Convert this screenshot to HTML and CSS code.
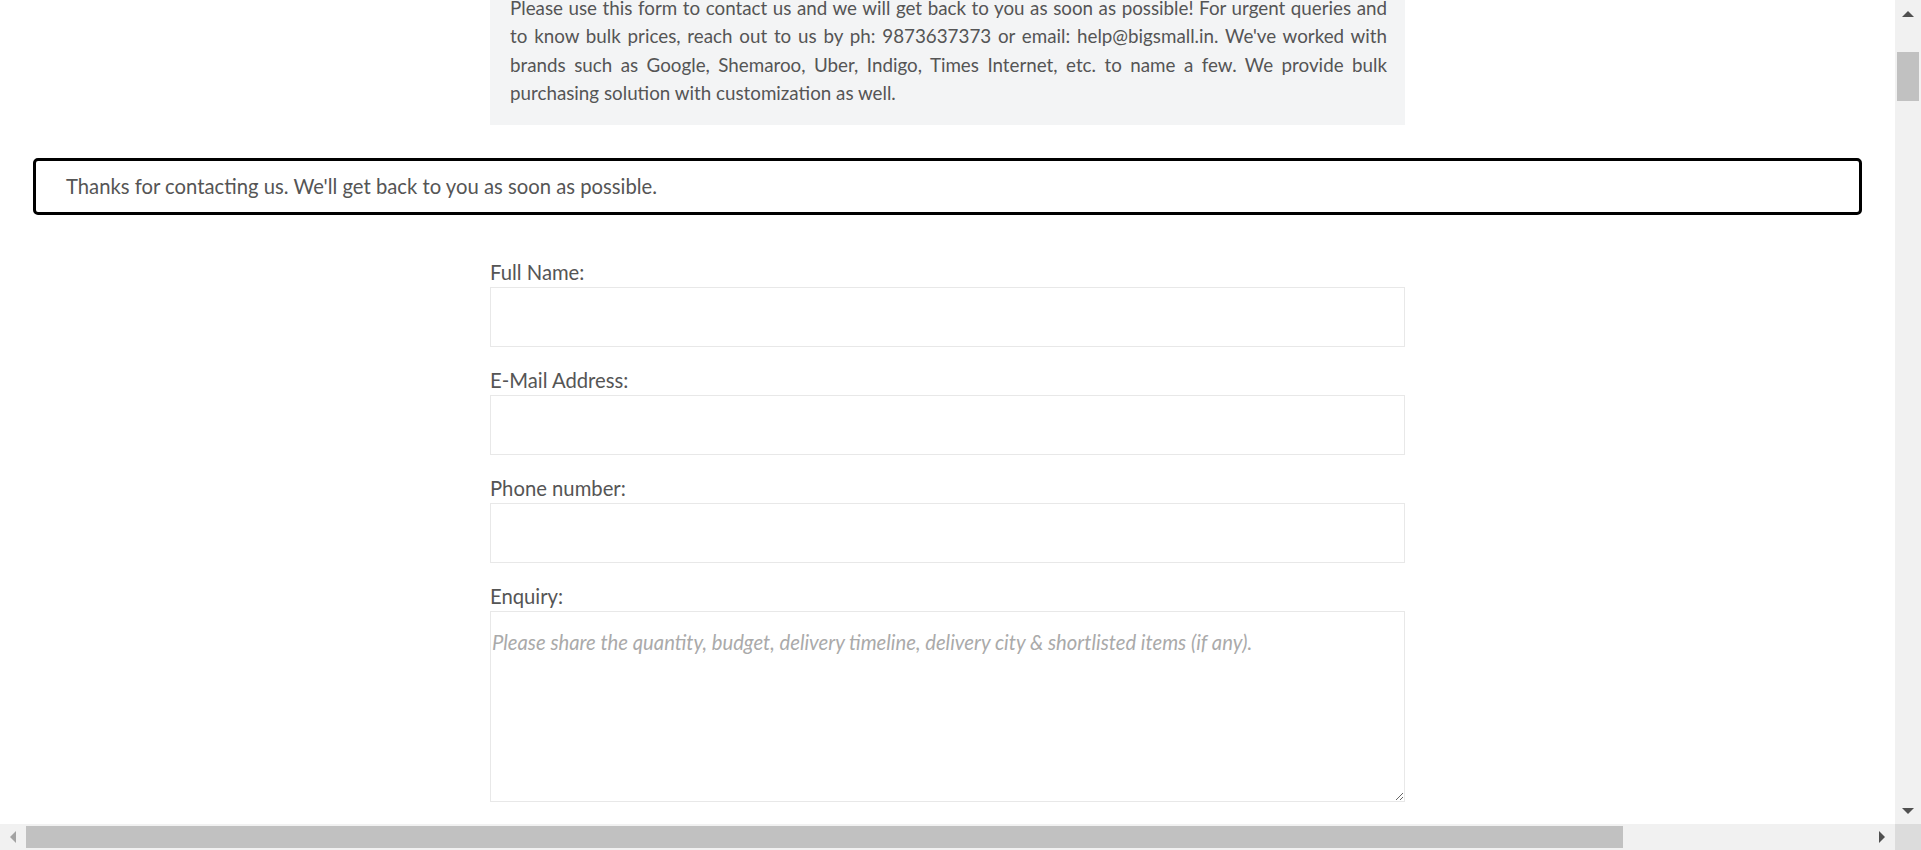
FILE: index.html
```html
<!DOCTYPE html>
<html lang="en">
<head>
<meta charset="utf-8">
<title>Contact us</title>
<link rel="stylesheet" href="styles.css">
</head>
<body>
<div class="frame">
  <main class="viewport">
    <div class="scrolled">
      <section class="intro">
        <p>Please use this form to contact us and we will get back to you as soon as possible! For urgent queries and to know bulk prices, reach out to us by ph: 9873637373 or email: help@bigsmall.in. We've worked with brands such as Google, Shemaroo, Uber, Indigo, Times Internet, etc. to name a few. We provide bulk purchasing solution with customization as well.</p>
      </section>
      <div class="notice">Thanks for contacting us. We'll get back to you as soon as possible.</div>
      <form class="form">
        <label class="label" for="name">Full Name:</label>
        <input class="field" id="name" type="text">
        <label class="label" for="email">E-Mail Address:</label>
        <input class="field" id="email" type="email">
        <label class="label" for="phone">Phone number:</label>
        <input class="field" id="phone" type="tel">
        <label class="label" for="enquiry">Enquiry:</label>
        <textarea class="area" id="enquiry" placeholder="Please share the quantity, budget, delivery timeline, delivery city &amp; shortlisted items (if any)."></textarea>
      </form>
    </div>
  </main>
  <div class="vbar">
    <div class="btn"><span class="tri up"></span></div>
    <div class="vtrack"><div class="vthumb"></div></div>
    <div class="btn"><span class="tri down"></span></div>
  </div>
  <div class="hbar">
    <div class="btn"><span class="tri left"></span></div>
    <div class="htrack"><div class="hthumb"></div></div>
    <div class="btn"><span class="tri right"></span></div>
  </div>
  <div class="corner"></div>
</div>
</body>
</html>
```

FILE: styles.css
```css
html, body {
  margin: 0;
  padding: 0;
  height: 100%;
  overflow: hidden;
  background: #ffffff;
}

body {
  font-family: Lato, "Open Sans", Arial, sans-serif;
  color: #555555;
  font-size: 20.25px;
}

.frame {
  display: grid;
  grid-template-columns: 1fr 26px;
  grid-template-rows: 1fr 26px;
  width: 100vw;
  height: 100vh;
}

.viewport {
  overflow: hidden;
  background: #ffffff;
}

.scrolled {
  margin-top: -26px;
}

.intro {
  width: 915px;
  margin: 0 auto;
  box-sizing: border-box;
  background: #f3f4f5;
  padding: 20px 18px 17px 20px;
}

.intro p {
  margin: 0;
  font-size: 18.8px;
  line-height: 28.4px;
  text-align: justify;
}

.notice {
  margin: 33px 33px 0;
  border: 3px solid #000000;
  border-radius: 5px;
  height: 51px;
  box-sizing: content-box;
  display: flex;
  align-items: center;
  padding: 0 30px;
  line-height: 29px;
}

.form {
  width: 915px;
  margin: 43px auto 0;
  display: flex;
  flex-direction: column;
}

.label {
  display: block;
  line-height: 29px;
}

.field {
  display: block;
  box-sizing: border-box;
  width: 100%;
  height: 60px;
  margin: 0 0 19px;
  border: 1px solid #e8e8e8;
  border-radius: 0;
  padding: 0 2px;
  font-family: inherit;
  font-size: 20.25px;
  color: #555555;
  background: #ffffff;
  outline: none;
}

.area {
  display: block;
  box-sizing: border-box;
  width: 100%;
  height: 191px;
  border: 1px solid #e8e8e8;
  border-radius: 0;
  padding: 16px 1px;
  margin: 0;
  font-family: inherit;
  font-size: 20.25px;
  line-height: 29px;
  color: #555555;
  background: #ffffff;
  outline: none;
  resize: both;
}

.area::placeholder {
  color: #aaaaaa;
  font-style: italic;
}

/* fake scrollbars */
.vbar {
  background: #f1f1f1;
  display: flex;
  flex-direction: column;
}

.hbar {
  background: #f1f1f1;
  display: flex;
}

.corner {
  background: #dcdcdc;
}

.btn {
  flex: 0 0 26px;
  width: 26px;
  height: 26px;
  display: flex;
  align-items: center;
  justify-content: center;
}

.vtrack {
  flex: 1;
  padding: 0 2px;
}

.vthumb {
  margin-top: 26px;
  height: 49px;
  background: #c1c1c1;
}

.htrack {
  flex: 1;
  padding: 2px 0;
  display: flex;
}

.hthumb {
  width: 1597px;
  height: 22px;
  background: #c1c1c1;
}

.tri {
  width: 0;
  height: 0;
  display: block;
}

.tri.up {
  border-left: 6px solid transparent;
  border-right: 6px solid transparent;
  border-bottom: 6px solid #505050;
  margin-top: 2px;
}

.tri.down {
  border-left: 6px solid transparent;
  border-right: 6px solid transparent;
  border-top: 6px solid #505050;
}

.tri.left {
  border-top: 6px solid transparent;
  border-bottom: 6px solid transparent;
  border-right: 6px solid #a3a3a3;
}

.tri.right {
  border-top: 6px solid transparent;
  border-bottom: 6px solid transparent;
  border-left: 6px solid #505050;
}
```
